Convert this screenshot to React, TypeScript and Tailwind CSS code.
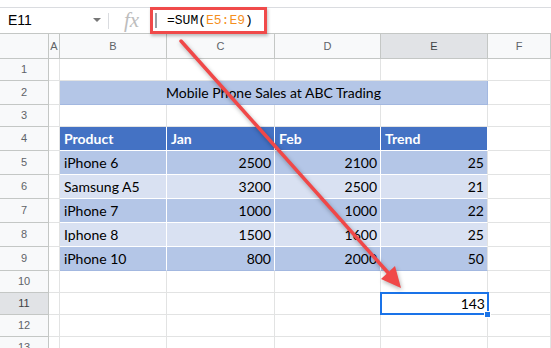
import React from 'react'

const COLS = ['A', 'B', 'C', 'D', 'E', 'F']
const COL_W = ['w-[11px]', 'w-[107px]', 'w-[108px]', 'w-[106px]', 'w-[107px]', 'flex-1']

const DARK = 'bg-[#b4c6e7]'
const LIGHT = 'bg-[#d9e1f2]'

const data = [
  ['iPhone 6', '2500', '2100', '25'],
  ['Samsung A5', '3200', '2500', '21'],
  ['iPhone 7', '1000', '1000', '22'],
  ['Iphone 8', '1500', '1600', '25'],
  ['iPhone 10', '800', '2000', '50'],
]

function RowHead({ n, active }: { n: number; active?: boolean }) {
  return (
    <div
      className={`w-[49px] shrink-0 border-r border-b border-[#c4c7c5] flex items-center justify-center text-[11px] ${
        active ? 'bg-[#e1e3e6] text-[#3c4043]' : 'bg-[#f8f9fa] text-[#5f6368]'
      }`}
    >
      {n}
    </div>
  )
}

function Empty({ i }: { i: number }) {
  return <div className={`${COL_W[i]} shrink-0 border-r border-b border-[#e2e3e3] bg-white`} />
}

function EmptyRow({ n, h, active }: { n: number; h: string; active?: boolean }) {
  return (
    <div className={`flex ${h}`}>
      <RowHead n={n} active={active} />
      {COLS.map((_, i) => (
        <Empty key={i} i={i} />
      ))}
    </div>
  )
}

export default function App() {
  return (
    <div className="relative w-[551px] h-[348px] overflow-hidden bg-white font-['Liberation_Sans',Arial,sans-serif]">
      {/* top strip */}
      <div className="h-[8px] border-b border-[#dadce0]" />

      {/* formula bar */}
      <div className="flex h-[26px] border-b border-[#c4c7c5] items-center">
        <div className="w-[108px] shrink-0 flex items-center pl-[8px] pr-[7px] text-[14px] text-[#000]">
          <span className="flex-1">E11</span>
          <svg width="8" height="5" viewBox="0 0 8 5">
            <path d="M0 0h8L4 4z" fill="#777" />
          </svg>
        </div>
        <div className="w-px h-[16px] bg-[#dadce0]" />
        <div className="w-[45px] shrink-0 flex justify-center font-['Liberation_Serif',serif] italic text-[21px] text-[#bdbdbd] leading-none">
          fx
        </div>
        <div className="w-[2px] h-[15px] bg-[#9aa0a6] ml-[1px]" />
        <div className="pl-[10px] font-['Liberation_Mono',monospace] text-[13px] text-[#000]">
          =SUM(<span className="text-[#f5901e]">E5:E9</span>)
        </div>
      </div>

      {/* column headers */}
      <div className="flex h-[25px]">
        <div className="w-[49px] shrink-0 border-r border-b border-[#c4c7c5] bg-[#f8f9fa]" />
        {COLS.map((c, i) => (
          <div
            key={c}
            className={`${COL_W[i]} shrink-0 border-r border-b border-[#c4c7c5] flex items-center justify-center text-[11px] ${
              c === 'E' ? 'bg-[#e1e3e6] text-[#3c4043]' : 'bg-[#f8f9fa] text-[#5f6368]'
            }`}
          >
            {c}
          </div>
        ))}
      </div>

      <EmptyRow n={1} h="h-[22px]" />

      {/* title row */}
      <div className="flex h-[24px]">
        <RowHead n={2} />
        <Empty i={0} />
        <div className="w-[428px] shrink-0 border-r border-b border-[#a3b8e0] bg-[#b4c6e7] flex items-center justify-center text-[14px] text-black font-['Lato',sans-serif]">
          Mobile Phone Sales at ABC Trading
        </div>
        <Empty i={5} />
      </div>

      <EmptyRow n={3} h="h-[22px]" />

      {/* header row */}
      <div className="flex h-[24px]">
        <RowHead n={4} />
        <Empty i={0} />
        {['Product', 'Jan', 'Feb', 'Trend'].map((t, i) => (
          <div
            key={t}
            className={`${COL_W[i + 1]} shrink-0 border-r border-b border-white bg-[#4472c4] flex items-center pl-[4px] text-[14px] font-bold text-white font-['Lato',sans-serif]`}
          >
            {t}
          </div>
        ))}
        <Empty i={5} />
      </div>

      {data.map((r, ri) => {
        const bg = ri % 2 === 0 ? DARK : LIGHT
        const last = ri === data.length - 1
        return (
          <div key={ri} className="flex h-[24px]">
            <RowHead n={5 + ri} />
            <Empty i={0} />
            {r.map((v, ci) => (
              <div
                key={ci}
                className={`${COL_W[ci + 1]} shrink-0 border-r border-b ${
                  last ? 'border-b-[#a3b8e0]' : 'border-b-white'
                } ${ci === 3 ? 'border-r-[#e2e3e3]' : 'border-r-white'} ${bg} flex items-center text-[14px] text-black font-['Lato',sans-serif] ${
                  ci === 0 ? 'pl-[4px]' : 'justify-end pr-[3px]'
                }`}
              >
                {v}
              </div>
            ))}
            <Empty i={5} />
          </div>
        )
      })}

      <EmptyRow n={10} h="h-[22px]" />

      {/* row 11 with selected cell */}
      <div className="flex h-[22px]">
        <RowHead n={11} active />
        <Empty i={0} />
        <Empty i={1} />
        <Empty i={2} />
        <Empty i={3} />
        <div className="relative w-[107px] shrink-0 border-b border-r border-[#e2e3e3]">
          <div className="absolute -left-px -top-px w-[109px] h-[23px] border-2 border-[#1a73e8] flex items-center justify-end pr-[2px] text-[14px] text-black font-['Lato',sans-serif]">
            143
          </div>
          <div className="absolute -right-[4px] -bottom-[4px] w-[7px] h-[7px] bg-[#1a73e8] border border-white" />
        </div>
        <Empty i={5} />
      </div>

      <EmptyRow n={12} h="h-[22px]" />
      <EmptyRow n={13} h="h-[22px]" />

      {/* annotation: box around formula */}
      <div className="absolute left-[150px] top-[7px] w-[117px] h-[27px] border-[3px] border-[#f04a4a] shadow-[1px_2px_3px_rgba(0,0,0,0.25)]" />

      {/* annotation: arrow */}
      <svg className="absolute inset-0 pointer-events-none drop-shadow-[1px_2px_2px_rgba(0,0,0,0.3)]" width="551" height="348">
        <line x1="181" y1="41" x2="391" y2="276" stroke="#f04848" strokeWidth="3.5" strokeLinecap="round" />
        <path d="M401 288 L381 279 L395 266 Z" fill="#f04848" />
      </svg>
    </div>
  )
}
